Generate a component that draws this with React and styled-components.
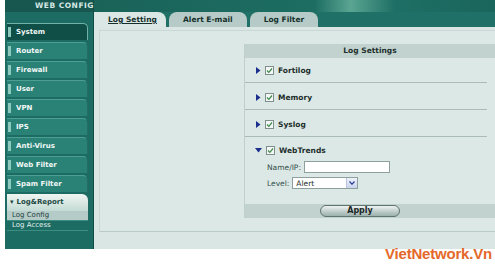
import React from 'react'
import styled, { createGlobalStyle, css } from 'styled-components'

const GlobalStyle = createGlobalStyle`
  html, body {
    margin: 0;
    padding: 0;
    background: #ffffff;
  }
  body {
    font-family: "DejaVu Sans", Verdana, sans-serif;
  }
`

const menu = [
  { label: 'System', active: true },
  { label: 'Router' },
  { label: 'Firewall' },
  { label: 'User' },
  { label: 'VPN' },
  { label: 'IPS' },
  { label: 'Anti-Virus' },
  { label: 'Web Filter' },
  { label: 'Spam Filter' },
]

const sections = ['Fortilog', 'Memory', 'Syslog']

function Arrow({ open }) {
  return open ? (
    <svg width="7" height="6" viewBox="0 0 7 6">
      <path d="M0 1 L7 1 L3.5 5.5 Z" fill="#1c2f8f" />
    </svg>
  ) : (
    <svg width="6" height="7" viewBox="0 0 6 7">
      <path d="M1 0 L5.5 3.5 L1 7 Z" fill="#1c2f8f" />
    </svg>
  )
}

function Check() {
  return (
    <svg width="9" height="9" viewBox="0 0 9 9">
      <rect x="0.5" y="0.5" width="8" height="8" fill="#f4f7f6" stroke="#7f8f8c" />
      <path d="M2 4.5 L3.8 6.3 L7 2.5" fill="none" stroke="#3d8a4a" strokeWidth="1.2" />
    </svg>
  )
}

export default function App() {
  return (
    <Page>
      <GlobalStyle />
      <Shell>
        <Sidebar>
          <Brand>WEB CONFIG</Brand>
          <Menu>
            {menu.map((m) => (
              <MenuItem key={m.label} $active={m.active}>
                <Marker />
                {m.label}
              </MenuItem>
            ))}
            <GroupItem>
              <span>▾</span>Log&amp;Report
            </GroupItem>
            <SubItem $current>Log Config</SubItem>
            <SubItem>Log Access</SubItem>
          </Menu>
        </Sidebar>

        <Main>
          <TopBar />
          <TabRow>
            <Tab $active>Log Setting</Tab>
            <Tab>Alert E-mail</Tab>
            <Tab>Log Filter</Tab>
          </TabRow>
          <Content>
            <Panel>
              <LogBox>
                <BoxHeader>Log Settings</BoxHeader>
                {sections.map((s, i) => (
                  <Section key={s} $first={i === 0}>
                    <Arrow />
                    <Check />
                    <SectionLabel>{s}</SectionLabel>
                  </Section>
                ))}
                <Section $open>
                  <Arrow open />
                  <Check />
                  <SectionLabel>WebTrends</SectionLabel>
                </Section>
                <Fields>
                  <Field>
                    Name/IP:
                    <TextInput />
                  </Field>
                  <Field>
                    Level:
                    <Select>
                      <span>Alert</span>
                      <SelectBtn>
                        <svg width="6" height="4" viewBox="0 0 6 4">
                          <path d="M0.5 0.5 L3 3.2 L5.5 0.5" fill="none" stroke="#2a3f9a" strokeWidth="1.2" />
                        </svg>
                      </SelectBtn>
                    </Select>
                  </Field>
                </Fields>
                <ApplyBar>
                  <ApplyButton>Apply</ApplyButton>
                </ApplyBar>
              </LogBox>
            </Panel>
          </Content>
        </Main>
      </Shell>
      <Footer>
        <Watermark>VietNetwork.Vn</Watermark>
      </Footer>
    </Page>
  )
}

const Page = styled.div`
  width: 495px;
  height: 265px;
  overflow: hidden;
  display: flex;
  flex-direction: column;
`

const Shell = styled.div`
  display: flex;
  height: 249px;
  padding-left: 5px;
`

const Sidebar = styled.div`
  width: 88px;
  background: #1d6c64;
  display: flex;
  flex-direction: column;
  border-right: 1px solid #0f4c45;
`

const Brand = styled.div`
  position: relative;
  z-index: 1;
  height: 12px;
  background: #17574f;
  color: #d6e8e4;
  font-size: 7.5px;
  font-weight: bold;
  letter-spacing: 0.5px;
  line-height: 12px;
  padding-left: 30px;
  white-space: nowrap;
`

const Menu = styled.div`
  display: flex;
  flex-direction: column;
  gap: 2px;
  padding: 11px 5px 0 2px;
`

const itemText = css`
  font-size: 7px;
  font-weight: bold;
  line-height: 17px;
  white-space: nowrap;
`

const MenuItem = styled.div`
  ${itemText};
  height: 17px;
  position: relative;
  display: flex;
  align-items: center;
  padding-left: 9px;
  color: #f2f8f6;
  background: ${(p) => (p.$active ? '#0f4f48' : '#2a8276')};
  border-top: 1px solid ${(p) => (p.$active ? '#6fb3a8' : '#4d9f93')};
  border-right: 1px solid ${(p) => (p.$active ? '#6fb3a8' : '#236f65')};
  border-top-right-radius: 5px;
  box-sizing: border-box;
`

const Marker = styled.i`
  position: absolute;
  left: 1px;
  top: 3px;
  bottom: 3px;
  width: 3px;
  background: #8ec9bd;
`

const GroupItem = styled.div`
  ${itemText};
  height: 17px;
  box-sizing: border-box;
  padding-left: 3px;
  color: #1f4a44;
  background: linear-gradient(#f0f6f2, #c3dad4);
  border-top-right-radius: 6px;
  span {
    font-size: 7px;
    margin-right: 3px;
  }
`

const SubItem = styled.div`
  font-size: 7px;
  line-height: 9px;
  height: 9px;
  margin-top: -2px;
  padding-left: 5px;
  color: ${(p) => (p.$current ? '#24423e' : '#e3efec')};
  background: ${(p) => (p.$current ? '#b5cbc7' : 'transparent')};
  border-bottom: 1px solid #3c8d82;
  white-space: nowrap;
`

const Main = styled.div`
  flex: 1;
  display: flex;
  flex-direction: column;
  min-width: 0;
`

const TopBar = styled.div`
  height: 12px;
  background: linear-gradient(90deg, #1a6359 0%, #1d6d63 55%, #5aa592 64%, #1e6f65 75%, #1a655c 100%);
`

const TabRow = styled.div`
  height: 15px;
  display: flex;
  align-items: flex-end;
  gap: 3px;
  background: #1f7067;
`

const Tab = styled.div`
  height: 15px;
  box-sizing: border-box;
  padding: 0 14px;
  font-size: 7.5px;
  font-weight: bold;
  line-height: 15px;
  white-space: nowrap;
  color: #15302c;
  background: ${(p) => (p.$active ? '#dbe7e5' : '#b6cbc7')};
  text-decoration: ${(p) => (p.$active ? 'underline' : 'none')};
  border-top-right-radius: 8px;
  border-top-left-radius: ${(p) => (p.$active ? '0' : '8px')};
  ${(p) => (p.$active ? 'width: 72px;' : '')}
`

const Content = styled.div`
  flex: 1;
  background: #dae6e4;
  padding: 3px 0 17px 5px;
  display: flex;
  flex-direction: column;
`

const Panel = styled.div`
  flex: 1;
  border-top: 1px solid #c9d8d6;
  border-left: 1px solid #c9d8d6;
  border-bottom: 1px solid #b9cac7;
  background: #dce8e6;
  display: flex;
  justify-content: flex-end;
  padding-top: 13px;
`

const LogBox = styled.div`
  width: 250px;
  height: 174px;
  border-left: 1px solid #bfcfcc;
  display: flex;
  flex-direction: column;
`

const BoxHeader = styled.div`
  height: 14px;
  background: #c2d2cf;
  text-align: center;
  font-size: 7.5px;
  font-weight: bold;
  line-height: 14px;
  color: #1d2f2c;
`

const Section = styled.div`
  display: flex;
  align-items: center;
  gap: 4px;
  height: ${(p) => (p.$first ? '25px' : p.$open ? '22px' : '27px')};
  padding: ${(p) => (p.$first ? '0' : p.$open ? '4px' : '2px')} 0 0 10px;
  margin-right: 8px;
  box-sizing: border-box;
  border-bottom: ${(p) => (p.$open ? 'none' : '1px solid #a9bab7')};
`

const SectionLabel = styled.span`
  font-size: 7.5px;
  font-weight: bold;
  color: #1c2e2b;
`

const Fields = styled.div`
  display: flex;
  flex-direction: column;
  gap: 4px;
  padding: 2px 0 0 22px;
`

const Field = styled.div`
  display: flex;
  align-items: center;
  gap: 3px;
  font-size: 7.5px;
  color: #34504c;
  height: 12px;
`

const TextInput = styled.div`
  width: 86px;
  height: 12px;
  box-sizing: border-box;
  background: #ffffff;
  border: 1px solid #8ea09d;
`

const Select = styled.div`
  width: 66px;
  height: 12px;
  box-sizing: border-box;
  background: #ffffff;
  border: 1px solid #8ea09d;
  display: flex;
  align-items: center;
  justify-content: space-between;
  padding-left: 3px;
  font-size: 7.5px;
  color: #1d2b29;
`

const SelectBtn = styled.span`
  width: 10px;
  height: 10px;
  display: flex;
  align-items: center;
  justify-content: center;
  background: linear-gradient(#eef2fb, #c9d3ec);
  border-left: 1px solid #b8c4de;
`

const ApplyBar = styled.div`
  margin-top: 15px;
  height: 14px;
  background: #c2d2cf;
  display: flex;
  justify-content: center;
  align-items: center;
  padding-right: 20px;
`

const ApplyButton = styled.div`
  width: 80px;
  height: 12px;
  box-sizing: border-box;
  border: 1px solid #5f736f;
  border-radius: 7px;
  background: linear-gradient(#eef3f2, #b9c9c6 60%, #9db1ad);
  text-align: center;
  font-size: 8px;
  font-weight: bold;
  line-height: 10px;
  color: #1c2826;
`

const Footer = styled.div`
  display: flex;
  justify-content: flex-end;
  padding-right: 3px;
  margin-top: -4px;
`

const Watermark = styled.div`
  font-family: "Liberation Sans", Arial, sans-serif;
  font-size: 15px;
  font-weight: bold;
  color: #e4692a;
  line-height: 18px;
  letter-spacing: -0.2px;
`
